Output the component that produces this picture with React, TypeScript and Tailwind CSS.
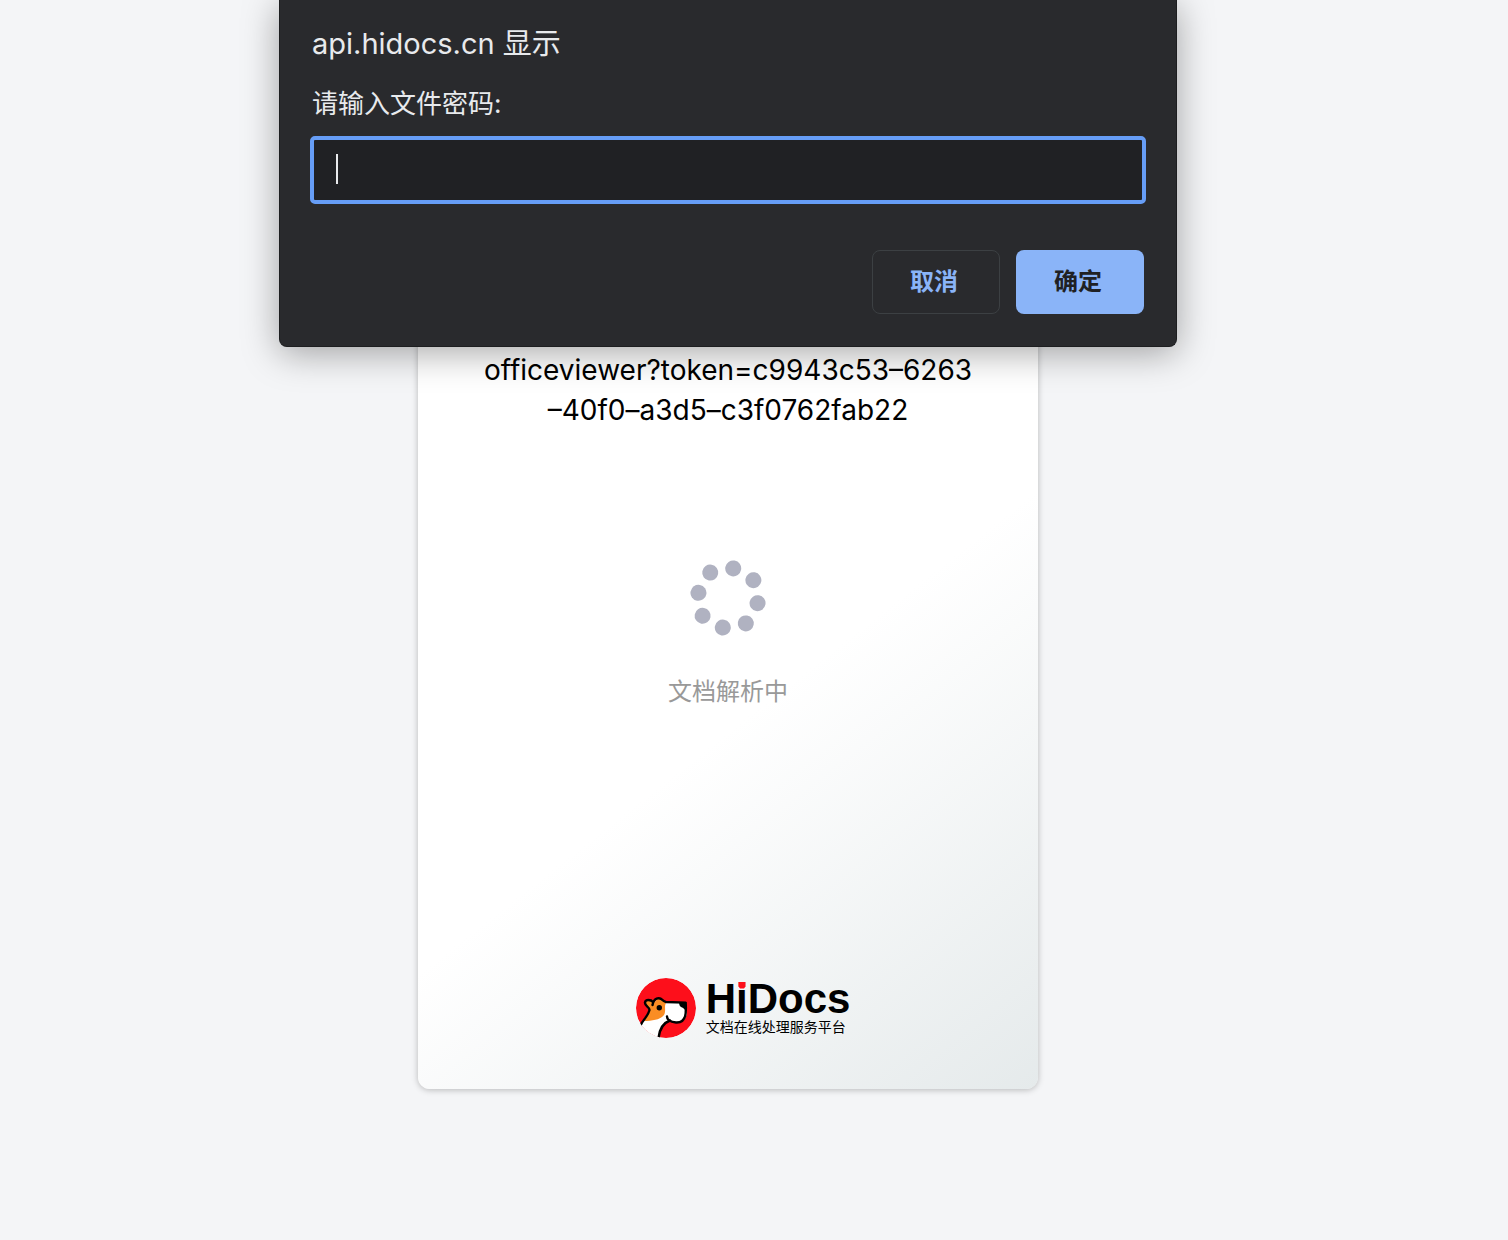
import { useState } from "react";

const SPINNER_DOTS = [10, 55, 100, 145, 190, 235, 280, 325];

function Spinner() {
  return (
    <svg viewBox="0 0 76 76" className="size-[76px]" role="img" aria-label="文档解析中">
      {SPINNER_DOTS.map((angle, i) => (
        <circle
          key={angle}
          cx="38"
          cy={i % 2 ? 7 : 8}
          r="8"
          fill="#b0b2c1"
          transform={`rotate(${angle} 38 38)`}
        />
      ))}
    </svg>
  );
}

function DogIcon() {
  return (
    <svg viewBox="0 0 60 60" className="size-[60px] shrink-0" aria-hidden="true">
      <defs>
        <clipPath id="badge">
          <circle cx="30" cy="30" r="30" />
        </clipPath>
      </defs>
      <g clipPath="url(#badge)">
        <circle cx="30" cy="30" r="30" fill="#fd0f1b" />
        {/* head and neck */}
        <path
          d="M4 47 L13 33 L9 26 L10 22 L15 22 L19 24 L22 20 L27 22 L30 24.5 L49 25 L51 35 C50 42 46 45 40 44.5 C36 44 34 43 33 42.5 C26 46 23 52 22 60 L4 60 Z"
          fill="#fff"
        />
        {/* ears and cheek */}
        <path
          d="M7.5 43 L13 33 L9 26 L10 22 L15 22 L19 24 L22 20 L27 22 L30 25 C28 28 30 32 28.5 36 C26 41 18 43 7.5 43 Z"
          fill="#fa8d24"
        />
        <g fill="none" stroke="#000" strokeWidth="2.4" strokeLinecap="round" strokeLinejoin="round">
          <path d="M5 46.5 C7 42 12 38 13.5 32 C13.5 29 8.5 28 9 24.5 C9.5 21 15 21.5 17 24" />
          <path d="M16.5 27 C17 22.5 20 19.5 24 20.5 C26 21 27 23.5 30 24 L49.5 24.6 C50.2 28 49.8 31 49.7 35 C49 42 45 44.8 40 44.5 C35 44 31 42.5 31 38.5" />
          <path d="M34 42.5 C27 45 23.5 51 22.5 60" />
        </g>
        <path d="M43 24 L50.5 24 L50.5 32 C48 32 48 30 46 29.5 C44 29 43 27 43 24 Z" fill="#000" />
        <circle cx="23.3" cy="29.7" r="2.7" fill="#000" />
      </g>
    </svg>
  );
}

function Logo() {
  return (
    <div className="flex items-center gap-[10px] pl-[30px]">
      <DogIcon />
      <div className="flex flex-col text-black">
        <div className="relative font-['Liberation_Sans',sans-serif] text-[42px] leading-[38px] font-bold">
          HiDocs
          <svg viewBox="0 0 8 8" className="absolute top-px left-8 size-2" aria-hidden="true">
            <path d="M0.5 1 H7.5 V5.5 L6 7.5 H2 L0.5 5.500 Z" fill="#fd0f1b" />
          </svg>
        </div>
        <div className="text-sm leading-[18px]">文档在线处理服务平台</div>
      </div>
    </div>
  );
}

function PasswordPrompt() {
  const [password, setPassword] = useState("");

  return (
    <div
      role="dialog"
      aria-labelledby="prompt-title"
      className="w-full max-w-[898px] rounded-b-lg border border-t-0 border-[#1d1e20] bg-[#292a2d] px-8 pb-8 shadow-[0_6px_36px_rgba(0,0,0,0.35)]"
    >
      <h1 id="prompt-title" className="pt-6 text-[29px] leading-10 text-[#e8eaed]">
        api.hidocs.cn 显示
      </h1>
      <form onSubmit={(e) => e.preventDefault()}>
        <label htmlFor="password" className="block pt-[22px] text-[26px] leading-9 text-[#e8eaed]">
          请输入文件密码:
        </label>
        <div className="relative mt-4">
          <input
            id="password"
            type="text"
            value={password}
            onChange={(e) => setPassword(e.target.value)}
            className="block h-16 w-full rounded-[3px] bg-[#202124] px-6 text-[26px] text-[#e8eaed] caret-transparent outline-4 -outline-offset-2 outline-[#669df6]"
          />
          {!password && <span className="absolute top-4 left-6 h-[30px] w-[2px] bg-[#e8eaed]" />}
        </div>
        <div className="mt-12 flex justify-end gap-4 text-2xl font-bold">
          <button type="button" className="h-16 w-32 rounded-lg border border-[#3c4043] pr-1 text-[#8ab4f8]">
            取消
          </button>
          <button type="submit" className="h-16 w-32 rounded-lg bg-[#8ab4f8] pr-1 text-[#202124]">
            确定
          </button>
        </div>
      </form>
    </div>
  );
}

export default function App() {
  return (
    <div className="min-h-screen bg-[#f4f5f7] pr-[52px] font-['Inter','Noto_Sans_CJK_SC',sans-serif]">
      {/* Document card */}
      <main className="flex justify-center pt-[212px] pb-[150px]">
        <section className="flex w-full max-w-[620px] flex-col items-center rounded-xl bg-linear-[142deg,#ffffff_56%,#e5eaeb_100%] px-15 pt-[138px] pb-[51px] shadow-[0_1px_6px_rgba(0,0,0,0.25)]">
          <p className="text-center text-[28px] leading-10 text-black">
            officeviewer?token=c9943c53–6263
            <br />
            –40f0–a3d5–c3f0762fab22
          </p>
          <div className="mt-[130px]">
            <Spinner />
          </div>
          <p className="mt-[38px] text-2xl leading-9 text-[#999999]">文档解析中</p>
          <div className="mt-[268px]">
            <Logo />
          </div>
        </section>
      </main>

      {/* Browser prompt, over the page */}
      <div className="absolute inset-x-0 top-0 flex justify-center pr-[52px]">
        <PasswordPrompt />
      </div>
    </div>
  );
}
